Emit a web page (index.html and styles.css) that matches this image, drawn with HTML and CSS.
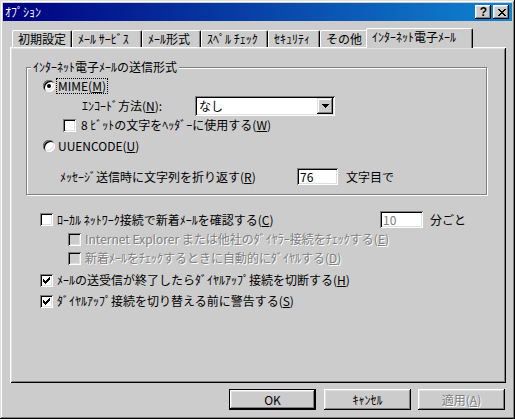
FILE: index.html
```html
<!DOCTYPE html>
<html lang="ja">
<head>
<meta charset="utf-8">
<title>ｵﾌﾟｼｮﾝ</title>
<link rel="stylesheet" href="styles.css">
</head>
<body>
<div class="window">
  <div class="titlebar">
    <span class="title">ｵﾌﾟｼｮﾝ</span>
    <div class="tb-buttons">
      <span class="tb-btn help">?</span>
      <span class="tb-btn close"><svg width="8" height="7" viewBox="0 0 8 7" shape-rendering="crispEdges"><path d="M0 0h2v1h-2z M6 0h2v1h-2z M1 1h2v1h-2z M5 1h2v1h-2z M2 2h4v1h-4z M3 3h2v1h-2z M2 4h4v1h-4z M1 5h2v1h-2z M5 5h2v1h-2z M0 6h2v1h-2z M6 6h2v1h-2z" fill="#000"/></svg></span>
    </div>
  </div>
  <div class="body">
    <div class="tabs">
      <div class="tab t1">初期設定</div>
      <div class="tab t2">ﾒｰﾙ ｻｰﾋﾞｽ</div>
      <div class="tab t3">ﾒｰﾙ形式</div>
      <div class="tab t4">ｽﾍﾟﾙ ﾁｪｯｸ</div>
      <div class="tab t5">ｾｷｭﾘﾃｨ</div>
      <div class="tab t6">その他</div>
      <div class="tab active">ｲﾝﾀｰﾈｯﾄ電子ﾒｰﾙ</div>
    </div>
    <div class="panel">
      <div class="group">
        <div class="group-title">ｲﾝﾀｰﾈｯﾄ電子ﾒｰﾙの送信形式</div>
        <div class="row r-mime">
          <span class="radio on"><span class="dot"></span></span>
          <span class="label focus">MIME(<u>M</u>)</span>
        </div>
        <div class="row r-enc">
          <span class="label enc-label">ｴﾝｺｰﾄﾞ方法(<u>N</u>):</span>
          <div class="combo">
            <span class="combo-text">なし</span>
            <span class="combo-btn"><svg width="7" height="4" viewBox="0 0 7 4" shape-rendering="crispEdges"><path d="M0 0h7v1h-7z M1 1h5v1h-5z M2 2h3v1h-3z M3 3h1v1h-1z" fill="#000"/></svg></span>
          </div>
        </div>
        <div class="row r-8bit">
          <span class="check"></span>
          <span class="label">8 ﾋﾞｯﾄの文字をﾍｯﾀﾞｰに使用する(<u>W</u>)</span>
        </div>
        <div class="row r-uu">
          <span class="radio"></span>
          <span class="label uu-label">UUENCODE(<u>U</u>)</span>
        </div>
        <div class="row r-wrap">
          <span class="label wrap-label">ﾒｯｾｰｼﾞ送信時に文字列を折り返す(<u>R</u>)</span>
          <span class="field wrap-field">76</span>
          <span class="label after">文字目で</span>
        </div>
      </div>

      <div class="row r-local">
        <span class="check"></span>
        <span class="label local-label">ﾛｰｶﾙ ﾈｯﾄﾜｰｸ接続で新着ﾒｰﾙを確認する(<u>C</u>)</span>
        <span class="field disabled-field">10</span>
        <span class="label after">分ごと</span>
      </div>
      <div class="row r-ie">
        <span class="check disabled"></span>
        <span class="label disabled-text">Internet Explorer または他社のﾀﾞｲﾔﾗｰ接続をﾁｪｯｸする(<u>E</u>)</span>
      </div>
      <div class="row r-new">
        <span class="check disabled"></span>
        <span class="label disabled-text">新着ﾒｰﾙをﾁｪｯｸするときに自動的にﾀﾞｲﾔﾙする(<u>D</u>)</span>
      </div>
      <div class="row r-hang">
        <span class="check on"><svg width="7" height="7" viewBox="0 0 7 7" shape-rendering="crispEdges"><path d="M6 0h1v1h-1z M5 1h2v1h-2z M0 2h1v1h-1z M4 2h3v1h-3z M0 3h2v1h-2z M3 3h3v1h-3z M0 4h5v1h-5z M1 5h3v1h-3z M2 6h1v1h-1z" fill="#000"/></svg></span>
        <span class="label">ﾒｰﾙの送受信が終了したらﾀﾞｲﾔﾙｱｯﾌﾟ接続を切断する(<u>H</u>)</span>
      </div>
      <div class="row r-warn">
        <span class="check on"><svg width="7" height="7" viewBox="0 0 7 7" shape-rendering="crispEdges"><path d="M6 0h1v1h-1z M5 1h2v1h-2z M0 2h1v1h-1z M4 2h3v1h-3z M0 3h2v1h-2z M3 3h3v1h-3z M0 4h5v1h-5z M1 5h3v1h-3z M2 6h1v1h-1z" fill="#000"/></svg></span>
        <span class="label">ﾀﾞｲﾔﾙｱｯﾌﾟ接続を切り替える前に警告する(<u>S</u>)</span>
      </div>
    </div>
    <div class="buttons">
      <span class="btn default">OK</span>
      <span class="btn b-cancel">ｷｬﾝｾﾙ</span>
      <span class="btn b-apply disabled-text">適用(<u>A</u>)</span>
    </div>
  </div>
</div>
</body>
</html>
```

FILE: styles.css
```css
* { box-sizing: border-box; }
html, body { margin: 0; padding: 0; }
body {
  width: 515px;
  height: 419px;
  overflow: hidden;
  background: #cccccc;
  font-family: "Noto Sans CJK JP", "Noto Sans", sans-serif;
  font-size: 12px;
  line-height: 12px;
  color: #000;
}
u { text-underline-offset: 1px; }

.window {
  width: 515px;
  height: 419px;
  padding: 3px;
  background: #cccccc;
  box-shadow: inset -1px -1px #000, inset 1px 1px #dfdfdf, inset -2px -2px #808080, inset 2px 2px #fff;
  display: flex;
  flex-direction: column;
}

.titlebar {
  height: 18px;
  flex: none;
  background: linear-gradient(to right, #000080, #1084d0);
  display: flex;
  align-items: center;
  justify-content: space-between;
  padding: 0 3px 0 2px;
  color: #fff;
}
.title { white-space: nowrap; }
.tb-buttons { display: flex; gap: 2px; }
.tb-btn {
  width: 16px;
  height: 14px;
  background: #cccccc;
  box-shadow: inset -1px -1px #000, inset 1px 1px #fff, inset -2px -2px #808080, inset 2px 2px #dfdfdf;
  display: flex;
  align-items: center;
  justify-content: center;
  color: #000;
}
.help { font-family: "Liberation Sans", sans-serif; font-weight: bold; font-size: 12px; padding-left: 1px; }
.close svg { display: block; margin-left: 1px; }

.body {
  flex: 1;
  padding: 7px 6px 0 7px;
  display: flex;
  flex-direction: column;
}

.tabs {
  height: 19px;
  display: flex;
  align-items: flex-end;
  padding-left: 2px;
  flex: none;
}
.tab {
  height: 17px;
  padding: 2px 0 0 5px;
  border-top: 1px solid #fff;
  border-left: 1px solid #fff;
  border-right: 1px solid #000;
  border-radius: 2px 2px 0 0;
  box-shadow: inset -1px 0 #808080;
  white-space: nowrap;
  background: #cccccc;
}
.t1 { width: 60px; }
.t2 { width: 70px; }
.t3 { width: 59px; }
.t4 { width: 67px; }
.t5 { width: 52px; }
.t6 { width: 48px; }
.tab.active {
  position: relative;
  width: 107px;
  height: 20px;
  margin-left: -2px;
  margin-bottom: -1px;
  padding-top: 2px;
}

.panel {
  height: 336px;
  flex: none;
  padding: 20px 0 0 16px;
  background: #cccccc;
  box-shadow: inset 1px 1px #fff, inset -1px -1px #000, inset 2px 2px #dfdfdf, inset -2px -2px #808080;
}

.group {
  width: 461px;
  height: 128px;
  border: 1px solid #808080;
  box-shadow: inset 1px 1px #fff, 1px 1px #fff;
}
.group-title {
  width: fit-content;
  margin: -7px 0 0 4px;
  padding: 0 2px;
  background: #cccccc;
  white-space: nowrap;
}

.row {
  display: flex;
  align-items: center;
  height: 16px;
  white-space: nowrap;
}
.label { white-space: nowrap; }

.r-mime { margin-top: 5px; padding-left: 16px; }
.focus {
  margin-left: 2px;
  padding: 1px;
  outline: 1px dotted #000;
  outline-offset: 0;
}
.r-enc { margin-top: 2px; height: 20px; padding-left: 55px; }
.enc-label { width: 113px; }
.r-8bit { margin-top: 1px; padding-left: 36px; }
.r-uu { margin-top: 5px; padding-left: 16px; }
.uu-label { margin-left: 3px; }
.r-wrap { margin-top: 14px; height: 17px; padding-left: 33px; }
.wrap-label { width: 237px; }
.wrap-field { width: 41px; }
.after { margin-left: 8px; }

.r-local { margin-top: 16px; height: 17px; padding-left: 14px; }
.local-label { width: 323px; }
.disabled-field { width: 43px; background: #cccccc; color: #808080; }
.r-local .after { margin-left: 7px; }
.r-ie { margin-top: 3px; padding-left: 42px; }
.r-new { margin-top: 3px; padding-left: 42px; }
.r-hang { margin-top: 6px; padding-left: 14px; }
.r-warn { margin-top: 5px; padding-left: 14px; }

.check {
  width: 13px;
  height: 13px;
  flex: none;
  margin-right: 4px;
  background: #fff;
  box-shadow: inset 1px 1px #808080, inset -1px -1px #fff, inset 2px 2px #000, inset -2px -2px #dfdfdf;
  display: flex;
  align-items: center;
  justify-content: center;
}
.check svg { display: block; }
.check.disabled { background: #cccccc; }
.r-8bit .check { margin-right: 5px; }

.radio {
  width: 12px;
  height: 12px;
  flex: none;
  border-radius: 50%;
  background: #fff;
  box-shadow: inset 1px 1px #808080, inset -1px -1px #fff, inset 2px 2px #000, inset -2px -2px #dfdfdf;
  display: flex;
  align-items: center;
  justify-content: center;
}
.dot {
  width: 4px;
  height: 4px;
  border-radius: 50%;
  background: #000;
}

.field {
  height: 17px;
  padding: 3px 0 0 3px;
  background: #fff;
  box-shadow: inset 1px 1px #808080, inset -1px -1px #fff, inset 2px 2px #000, inset -2px -2px #dfdfdf;
  flex: none;
}

.combo {
  width: 140px;
  height: 20px;
  background: #fff;
  box-shadow: inset 1px 1px #808080, inset -1px -1px #fff, inset 2px 2px #000, inset -2px -2px #dfdfdf;
  display: flex;
  align-items: center;
  justify-content: space-between;
  padding: 2px;
}
.combo-text { padding-left: 2px; }
.combo-btn {
  width: 16px;
  height: 16px;
  background: #cccccc;
  box-shadow: inset -1px -1px #000, inset 1px 1px #dfdfdf, inset -2px -2px #808080, inset 2px 2px #fff;
  display: flex;
  align-items: center;
  justify-content: center;
}
.combo-btn svg { display: block; margin-left: 1px; }

.disabled-text { color: #808080; text-shadow: 1px 1px 0 #fff; }

.buttons {
  margin-top: 6px;
  height: 21px;
  flex: none;
  display: flex;
  justify-content: flex-end;
  padding-right: 1px;
}
.btn {
  width: 87px;
  height: 21px;
  background: #cccccc;
  box-shadow: inset -1px -1px #000, inset 1px 1px #fff, inset -2px -2px #808080, inset 2px 2px #dfdfdf;
  display: flex;
  align-items: center;
  justify-content: center;
  white-space: nowrap;
}
.btn.default {
  border: 1px solid #000;
}
.b-cancel { margin-left: 8px; }
.b-apply { margin-left: 7px; }
```
